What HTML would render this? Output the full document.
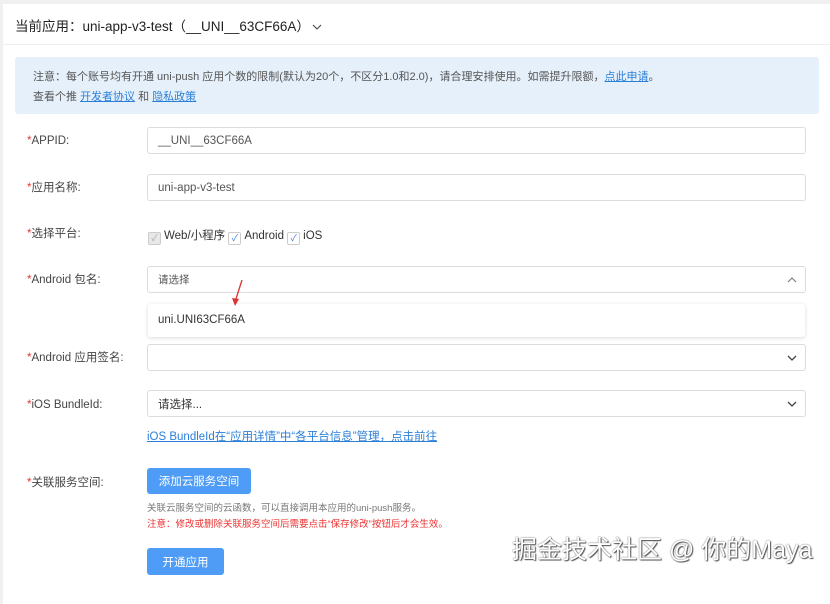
<!DOCTYPE html><html><head><meta charset="utf-8"><style>
*{box-sizing:border-box;margin:0;padding:0}
body{width:830px;height:594px;background:#f0f0f0;font-family:"Liberation Sans","Noto Sans CJK SC",sans-serif;font-size:12px;color:#333;position:relative;overflow:hidden}
.card{position:absolute;left:3px;top:4px;width:830px;height:600px;background:#fff}
.hdr{position:absolute;left:15px;top:15px;font-size:13.5px;color:#222}
.line{position:absolute;left:3px;top:44px;width:827px;height:1px;background:#eee}
.note{position:absolute;left:15px;top:57px;width:804px;height:57px;background:#e6f0fa;border-radius:3px;padding:10px 0 0 18px;font-size:11px;color:#555;line-height:20px}
a{color:#2b7fd9;text-decoration:underline}
.lbl{position:absolute;left:27px;font-size:11.5px;color:#444;line-height:14px}
.lbl b{color:#e33;font-weight:normal}
.inp{position:absolute;left:147px;width:659px;height:27px;border:1px solid #dcdcdc;border-radius:3px;padding-left:10px;display:flex;align-items:center;font-size:11.5px;color:#555}
.chev{position:absolute;right:8px;top:9px}
.cb{display:inline-block;width:13px;height:13px;border:1px solid #ccc;border-radius:2px;vertical-align:-2px;text-align:center;font-size:9px;line-height:11px;color:#3a7be0;margin-right:3px}
.btn{position:absolute;left:147px;background:#4e9cf5;color:#fff;border-radius:3px;font-size:11.5px;display:flex;align-items:center;justify-content:center}
</style></head><body>
<div class="card"></div>
<div class="hdr">当前应用：uni-app-v3-test（__UNI__63CF66A）<svg width="10" height="8" style="margin-left:2px"><path d="M1 2 L5 6 L9 2" fill="none" stroke="#444" stroke-width="1.1"/></svg></div>
<div class="line"></div>
<div class="note">注意：每个账号均有开通 uni-push 应用个数的限制(默认为20个，不区分1.0和2.0)，请合理安排使用。如需提升限额，<a>点此申请</a>。<br>查看个推 <a>开发者协议</a> 和 <a>隐私政策</a></div>
<div class="lbl" style="top:134px"><b>*</b>APPID:</div>
<div class="inp" style="top:127px">__UNI__63CF66A</div>
<div class="lbl" style="top:181px"><b>*</b>应用名称:</div>
<div class="inp" style="top:174px">uni-app-v3-test</div>
<div class="lbl" style="top:227px"><b>*</b>选择平台:</div>
<div style="position:absolute;left:148px;top:227px;font-size:11.5px"><span class="cb" style="background:#e8e8e8;color:#aaa">✓</span>Web/小程序 <span class="cb">✓</span>Android <span class="cb">✓</span>iOS</div>
<div class="lbl" style="top:273px"><b>*</b>Android 包名:</div>
<div class="inp" style="top:266px;font-size:10.5px">请选择<svg class="chev" width="10" height="8"><path d="M1 6 L5 2 L9 6" fill="none" stroke="#777" stroke-width="1.1"/></svg></div>
<div style="position:absolute;left:148px;top:304px;width:657px;height:33px;background:#fff;box-shadow:0 1px 4px rgba(0,0,0,.15);border-radius:3px;padding-left:10px;line-height:33px;font-size:11.5px;color:#333">uni.UNI63CF66A</div>
<svg style="position:absolute;left:230px;top:278px" width="16" height="30"><line x1="12" y1="2" x2="5" y2="24" stroke="#d33" stroke-width="1.3"/><path d="M2 20 L5 28 L9 21Z" fill="#d33"/></svg>
<div class="lbl" style="top:351px"><b>*</b>Android 应用签名:</div>
<div class="inp" style="top:344px"><svg class="chev" width="10" height="8"><path d="M1 2 L5 6 L9 2" fill="none" stroke="#444" stroke-width="1.3"/></svg></div>
<div class="lbl" style="top:398px"><b>*</b>iOS BundleId:</div>
<div class="inp" style="top:390px;color:#333">请选择...<svg class="chev" width="10" height="8"><path d="M1 2 L5 6 L9 2" fill="none" stroke="#444" stroke-width="1.3"/></svg></div>
<div style="position:absolute;left:147px;top:428px;font-size:11.5px"><a>iOS BundleId在“应用详情”中“各平台信息”管理，点击前往</a></div>
<div class="lbl" style="top:476px"><b>*</b>关联服务空间:</div>
<div class="btn" style="top:468px;width:104px;height:26px">添加云服务空间</div>
<div style="position:absolute;left:147px;top:500px;font-size:9.5px;color:#777">关联云服务空间的云函数，可以直接调用本应用的uni-push服务。</div>
<div style="position:absolute;left:147px;top:516px;font-size:9.5px;color:#e33">注意：修改或删除关联服务空间后需要点击“保存修改”按钮后才会生效。</div>
<div class="btn" style="top:548px;width:77px;height:27px">开通应用</div>
<div style="position:absolute;left:512px;top:530px;font-size:25px;color:#fff;text-shadow:0 0 1.5px #444,1px 1px 1px #555;white-space:nowrap">掘金技术社区 @ 你的Maya</div>
</body></html>
